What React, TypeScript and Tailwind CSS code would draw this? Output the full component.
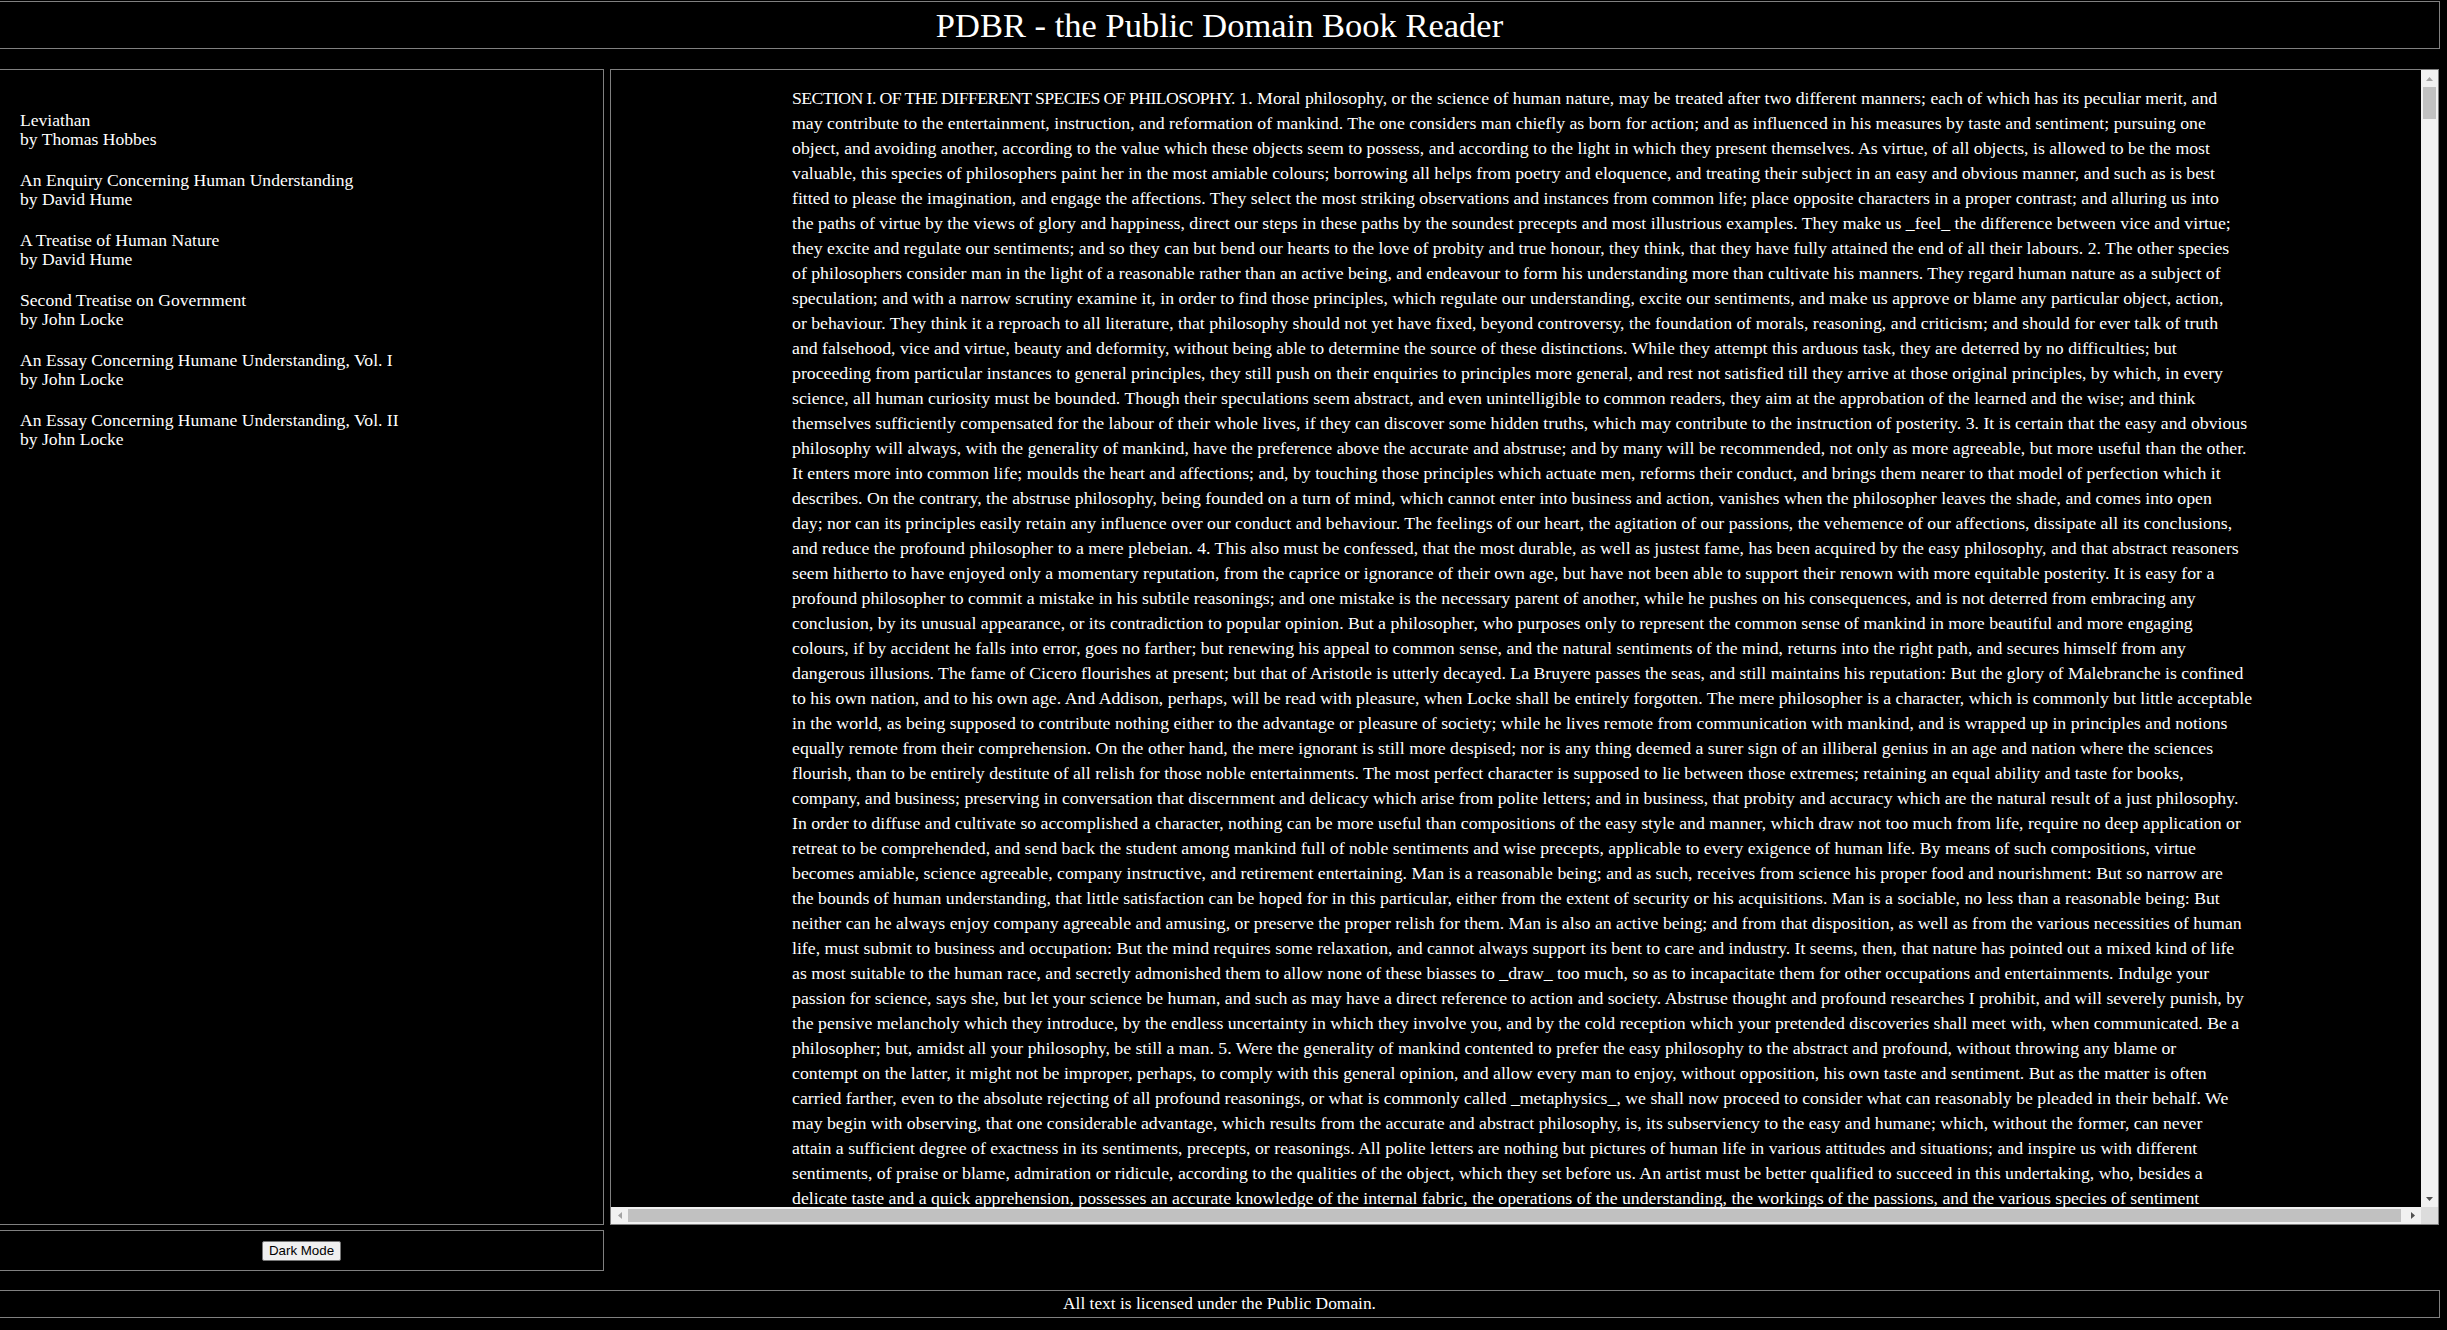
import React from 'react'

const books = [
  { title: 'Leviathan', author: 'Thomas Hobbes' },
  { title: 'An Enquiry Concerning Human Understanding', author: 'David Hume' },
  { title: 'A Treatise of Human Nature', author: 'David Hume' },
  { title: 'Second Treatise on Government', author: 'John Locke' },
  { title: 'An Essay Concerning Humane Understanding, Vol. I', author: 'John Locke' },
  { title: 'An Essay Concerning Humane Understanding, Vol. II', author: 'John Locke' },
]

const heading = 'SECTION I. OF THE DIFFERENT SPECIES OF PHILOSOPHY.'

// lines as the page breaks them (the first one follows the heading)
const lines = [
  ' 1. Moral philosophy, or the science of human nature, may be treated after two different manners; each of which has its peculiar merit, and',
  'may contribute to the entertainment, instruction, and reformation of mankind. The one considers man chiefly as born for action; and as influenced in his measures by taste and sentiment; pursuing one',
  'object, and avoiding another, according to the value which these objects seem to possess, and according to the light in which they present themselves. As virtue, of all objects, is allowed to be the most',
  'valuable, this species of philosophers paint her in the most amiable colours; borrowing all helps from poetry and eloquence, and treating their subject in an easy and obvious manner, and such as is best',
  'fitted to please the imagination, and engage the affections. They select the most striking observations and instances from common life; place opposite characters in a proper contrast; and alluring us into',
  'the paths of virtue by the views of glory and happiness, direct our steps in these paths by the soundest precepts and most illustrious examples. They make us _feel_ the difference between vice and virtue;',
  'they excite and regulate our sentiments; and so they can but bend our hearts to the love of probity and true honour, they think, that they have fully attained the end of all their labours. 2. The other species',
  'of philosophers consider man in the light of a reasonable rather than an active being, and endeavour to form his understanding more than cultivate his manners. They regard human nature as a subject of',
  'speculation; and with a narrow scrutiny examine it, in order to find those principles, which regulate our understanding, excite our sentiments, and make us approve or blame any particular object, action,',
  'or behaviour. They think it a reproach to all literature, that philosophy should not yet have fixed, beyond controversy, the foundation of morals, reasoning, and criticism; and should for ever talk of truth',
  'and falsehood, vice and virtue, beauty and deformity, without being able to determine the source of these distinctions. While they attempt this arduous task, they are deterred by no difficulties; but',
  'proceeding from particular instances to general principles, they still push on their enquiries to principles more general, and rest not satisfied till they arrive at those original principles, by which, in every',
  'science, all human curiosity must be bounded. Though their speculations seem abstract, and even unintelligible to common readers, they aim at the approbation of the learned and the wise; and think',
  'themselves sufficiently compensated for the labour of their whole lives, if they can discover some hidden truths, which may contribute to the instruction of posterity. 3. It is certain that the easy and obvious',
  'philosophy will always, with the generality of mankind, have the preference above the accurate and abstruse; and by many will be recommended, not only as more agreeable, but more useful than the other.',
  'It enters more into common life; moulds the heart and affections; and, by touching those principles which actuate men, reforms their conduct, and brings them nearer to that model of perfection which it',
  'describes. On the contrary, the abstruse philosophy, being founded on a turn of mind, which cannot enter into business and action, vanishes when the philosopher leaves the shade, and comes into open',
  'day; nor can its principles easily retain any influence over our conduct and behaviour. The feelings of our heart, the agitation of our passions, the vehemence of our affections, dissipate all its conclusions,',
  'and reduce the profound philosopher to a mere plebeian. 4. This also must be confessed, that the most durable, as well as justest fame, has been acquired by the easy philosophy, and that abstract reasoners',
  'seem hitherto to have enjoyed only a momentary reputation, from the caprice or ignorance of their own age, but have not been able to support their renown with more equitable posterity. It is easy for a',
  'profound philosopher to commit a mistake in his subtile reasonings; and one mistake is the necessary parent of another, while he pushes on his consequences, and is not deterred from embracing any',
  'conclusion, by its unusual appearance, or its contradiction to popular opinion. But a philosopher, who purposes only to represent the common sense of mankind in more beautiful and more engaging',
  'colours, if by accident he falls into error, goes no farther; but renewing his appeal to common sense, and the natural sentiments of the mind, returns into the right path, and secures himself from any',
  'dangerous illusions. The fame of Cicero flourishes at present; but that of Aristotle is utterly decayed. La Bruyere passes the seas, and still maintains his reputation: But the glory of Malebranche is confined',
  'to his own nation, and to his own age. And Addison, perhaps, will be read with pleasure, when Locke shall be entirely forgotten. The mere philosopher is a character, which is commonly but little acceptable',
  'in the world, as being supposed to contribute nothing either to the advantage or pleasure of society; while he lives remote from communication with mankind, and is wrapped up in principles and notions',
  'equally remote from their comprehension. On the other hand, the mere ignorant is still more despised; nor is any thing deemed a surer sign of an illiberal genius in an age and nation where the sciences',
  'flourish, than to be entirely destitute of all relish for those noble entertainments. The most perfect character is supposed to lie between those extremes; retaining an equal ability and taste for books,',
  'company, and business; preserving in conversation that discernment and delicacy which arise from polite letters; and in business, that probity and accuracy which are the natural result of a just philosophy.',
  'In order to diffuse and cultivate so accomplished a character, nothing can be more useful than compositions of the easy style and manner, which draw not too much from life, require no deep application or',
  'retreat to be comprehended, and send back the student among mankind full of noble sentiments and wise precepts, applicable to every exigence of human life. By means of such compositions, virtue',
  'becomes amiable, science agreeable, company instructive, and retirement entertaining. Man is a reasonable being; and as such, receives from science his proper food and nourishment: But so narrow are',
  'the bounds of human understanding, that little satisfaction can be hoped for in this particular, either from the extent of security or his acquisitions. Man is a sociable, no less than a reasonable being: But',
  'neither can he always enjoy company agreeable and amusing, or preserve the proper relish for them. Man is also an active being; and from that disposition, as well as from the various necessities of human',
  'life, must submit to business and occupation: But the mind requires some relaxation, and cannot always support its bent to care and industry. It seems, then, that nature has pointed out a mixed kind of life',
  'as most suitable to the human race, and secretly admonished them to allow none of these biasses to _draw_ too much, so as to incapacitate them for other occupations and entertainments. Indulge your',
  'passion for science, says she, but let your science be human, and such as may have a direct reference to action and society. Abstruse thought and profound researches I prohibit, and will severely punish, by',
  'the pensive melancholy which they introduce, by the endless uncertainty in which they involve you, and by the cold reception which your pretended discoveries shall meet with, when communicated. Be a',
  'philosopher; but, amidst all your philosophy, be still a man. 5. Were the generality of mankind contented to prefer the easy philosophy to the abstract and profound, without throwing any blame or',
  'contempt on the latter, it might not be improper, perhaps, to comply with this general opinion, and allow every man to enjoy, without opposition, his own taste and sentiment. But as the matter is often',
  'carried farther, even to the absolute rejecting of all profound reasonings, or what is commonly called _metaphysics_, we shall now proceed to consider what can reasonably be pleaded in their behalf. We',
  'may begin with observing, that one considerable advantage, which results from the accurate and abstract philosophy, is, its subserviency to the easy and humane; which, without the former, can never',
  'attain a sufficient degree of exactness in its sentiments, precepts, or reasonings. All polite letters are nothing but pictures of human life in various attitudes and situations; and inspire us with different',
  'sentiments, of praise or blame, admiration or ridicule, according to the qualities of the object, which they set before us. An artist must be better qualified to succeed in this undertaking, who, besides a',
  'delicate taste and a quick apprehension, possesses an accurate knowledge of the internal fabric, the operations of the understanding, the workings of the passions, and the various species of sentiment',
]

function Arrow({ dir, active }: { dir: 'up' | 'down' | 'left' | 'right'; active?: boolean }) {
  const fill = active ? '#505050' : '#a3a3a3'
  const vertical = dir === 'up' || dir === 'down'
  const points = {
    up: '0,4 3.5,0 7,4',
    down: '0,0 7,0 3.5,4',
    left: '4,0 4,7 0,3.5',
    right: '0,0 4,3.5 0,7',
  }[dir]
  return (
    <svg width={vertical ? 7 : 4} height={vertical ? 4 : 7} viewBox={vertical ? '0 0 7 4' : '0 0 4 7'}>
      <polygon points={points} fill={fill} />
    </svg>
  )
}

export default function App() {
  return (
    <div className="min-h-screen overflow-hidden bg-black font-['Liberation_Serif','Times_New_Roman',serif] text-white">
      <div className="-ml-px w-[2441px] pt-px">
        <header className="flex h-[48px] items-center justify-center border border-[#808080] text-[34.5px] leading-none">
          PDBR - the Public Domain Book Reader
        </header>

        <div className="mt-[20px] flex items-start gap-[6px]">
          <div className="flex w-[605px] flex-col gap-[5px]">
            <nav className="h-[1156px] border border-[#808080] pl-[20px] pt-[41px] text-[17.6px] leading-[19px]">
              {books.map((b) => (
                <div key={b.title} className="mb-[22px]">
                  <div>{b.title}</div>
                  <div>by {b.author}</div>
                </div>
              ))}
            </nav>
            <div className="flex h-[41px] items-center justify-center border border-[#808080]">
              <button className="h-[20px] rounded-[2px] border border-[#767676] bg-[#efefef] px-[6px] font-['Liberation_Sans',Arial,sans-serif] text-[13.33px] leading-none text-black">
                Dark Mode
              </button>
            </div>
          </div>

          {/* reader pane with classic scrollbars */}
          <main className="grid h-[1156px] w-[1829px] grid-cols-[1fr_17px] grid-rows-[1fr_17px] border border-[#808080]">
            <div className="overflow-hidden px-[10%] text-[17.75px] leading-[25px]">
              <p className="my-[16px]">
                {lines.map((l, i) => (
                  <span key={i} className="block whitespace-nowrap">
                    {i === 0 && <span className="tracking-[-0.6px]">{heading}</span>}
                    {l}
                  </span>
                ))}
              </p>
            </div>

            <div className="flex flex-col bg-[#f1f1f1]">
              <div className="flex h-[17px] items-center justify-center">
                <Arrow dir="up" />
              </div>
              <div className="flex-1 px-[2px]">
                <div className="h-[32px] bg-[#c1c1c1]" />
              </div>
              <div className="flex h-[17px] items-center justify-center">
                <Arrow dir="down" active />
              </div>
            </div>

            <div className="flex bg-[#f1f1f1]">
              <div className="flex w-[17px] items-center justify-center">
                <Arrow dir="left" />
              </div>
              <div className="flex-1 py-[2px] pr-[3px]">
                <div className="h-full bg-[#c1c1c1]" />
              </div>
              <div className="flex w-[17px] items-center justify-center">
                <Arrow dir="right" active />
              </div>
            </div>

            <div className="bg-[#dcdcdc]" />
          </main>
        </div>

        <footer className="mt-[19px] flex h-[28px] items-center justify-center border border-[#808080] text-[17.4px] leading-none">
          All text is licensed under the Public Domain.
        </footer>
      </div>
    </div>
  )
}
